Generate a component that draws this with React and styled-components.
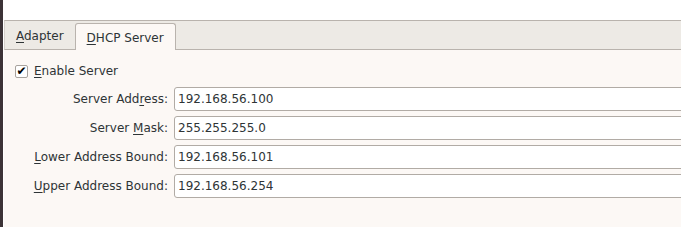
import React from 'react';
import styled, { createGlobalStyle } from 'styled-components';

const GlobalStyle = createGlobalStyle`
  html, body {
    margin: 0;
    padding: 0;
    background: #ffffff;
  }
  body {
    font-family: "DejaVu Sans", "Liberation Sans", sans-serif;
    font-size: 12px;
    color: #2e3436;
  }
`;

const Page = styled.div`
  display: flex;
  align-items: flex-start;
  width: 686px;
  height: 234px;
  overflow: hidden;
`;

const SideBar = styled.div`
  width: 3px;
  height: 227px;
  background: #3c3337;
  margin-right: 1px;
`;

const Notebook = styled.div`
  display: flex;
  flex-direction: column;
  width: 677px;
  height: 207px;
  margin-top: 20px;
`;

const TabBar = styled.div`
  display: flex;
  align-items: flex-end;
  height: 28px;
  background: #edeae5;
  border-top: 1px solid #b9b3ad;
  border-bottom: 1px solid #b9b3ad;
  border-left: 1px solid #d6d1cc;
`;

const Tab = styled.div`
  box-sizing: border-box;
  height: ${(p) => (p.$active ? '27px' : '28px')};
  padding: 0 11px;
  margin-bottom: ${(p) => (p.$active ? '-1px' : '0')};
  display: flex;
  align-items: center;
  padding-top: ${(p) => (p.$active ? '1px' : '2px')};
  background: ${(p) => (p.$active ? '#fcf8f5' : 'transparent')};
  border: ${(p) => (p.$active ? '1px solid #b9b3ad' : 'none')};
  border-bottom: none;
  border-radius: 3px 3px 0 0;
  color: #2e3436;
  white-space: nowrap;
`;

const Mnemonic = styled.span`
  text-decoration: underline;
  text-underline-offset: 2px;
`;

const Panel = styled.div`
  flex: 1;
  background: #fcf8f5;
  overflow: hidden;
  padding: 14px 0 0 11px;
`;

const CheckRow = styled.label`
  display: flex;
  align-items: center;
  gap: 6px;
  height: 14px;
  margin-bottom: 9px;
`;

const CheckBox = styled.span`
  box-sizing: border-box;
  width: 13px;
  height: 13px;
  border: 1px solid #a8a39e;
  border-radius: 2px;
  background: #ffffff;
  display: flex;
  align-items: center;
  justify-content: center;
  font-size: 12px;
  font-weight: bold;
  line-height: 1;
  color: #000000;
`;

const Form = styled.div`
  display: grid;
  grid-template-columns: 152px 520px;
  column-gap: 6px;
  row-gap: 5px;
  align-items: center;
  margin-left: 1px;
`;

const FieldLabel = styled.span`
  text-align: right;
  white-space: nowrap;
`;

const Field = styled.div`
  box-sizing: border-box;
  height: 24px;
  display: flex;
  align-items: center;
  padding: 0 3px;
  background: #ffffff;
  border: 1px solid #b1aba5;
  border-radius: 3px;
  white-space: nowrap;
`;

const fields = [
  { pre: 'Server Add', key: 'r', post: 'ess:', value: '192.168.56.100' },
  { pre: 'Server ', key: 'M', post: 'ask:', value: '255.255.255.0' },
  { pre: '', key: 'L', post: 'ower Address Bound:', value: '192.168.56.101' },
  { pre: '', key: 'U', post: 'pper Address Bound:', value: '192.168.56.254' },
];

export default function App() {
  return (
    <>
      <GlobalStyle />
      <Page>
        <SideBar />
        <Notebook>
          <TabBar>
            <Tab>
              <span>
                <Mnemonic>A</Mnemonic>dapter
              </span>
            </Tab>
            <Tab $active>
              <span>
                <Mnemonic>D</Mnemonic>HCP Server
              </span>
            </Tab>
          </TabBar>
          <Panel>
            <CheckRow>
              <CheckBox>✔</CheckBox>
              <span>
                <Mnemonic>E</Mnemonic>nable Server
              </span>
            </CheckRow>
            <Form>
              {fields.map((f) => (
                <React.Fragment key={f.value}>
                  <FieldLabel>
                    {f.pre}
                    <Mnemonic>{f.key}</Mnemonic>
                    {f.post}
                  </FieldLabel>
                  <Field>{f.value}</Field>
                </React.Fragment>
              ))}
            </Form>
          </Panel>
        </Notebook>
      </Page>
    </>
  );
}
